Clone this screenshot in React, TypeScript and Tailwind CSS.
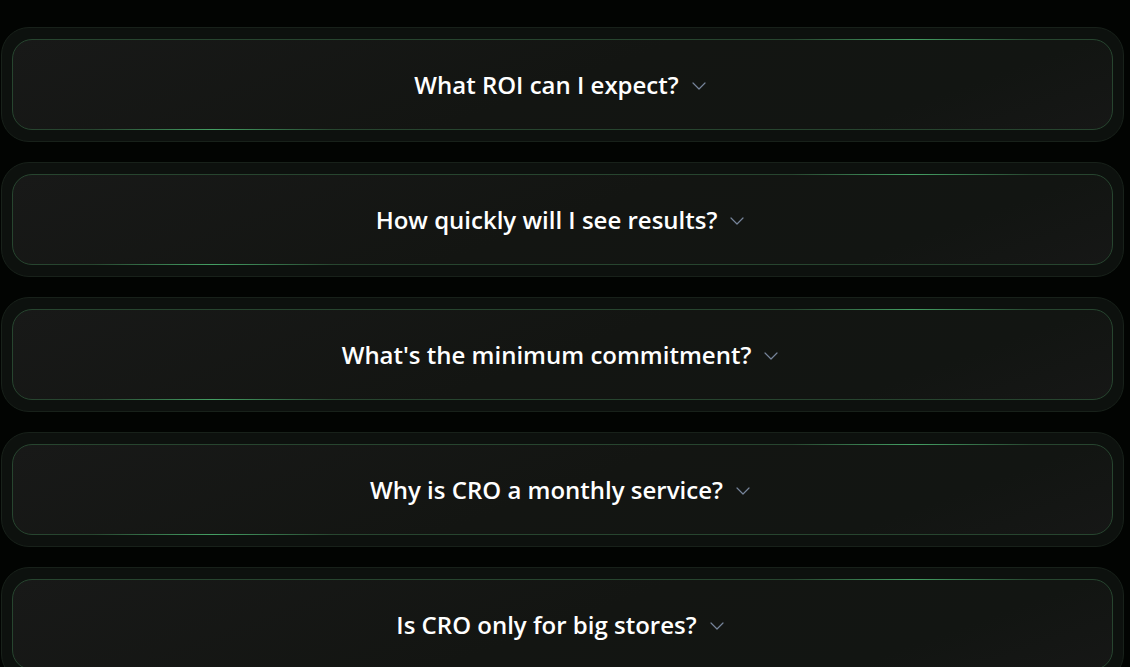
import { ChevronDown } from 'lucide-react'

const questions = [
  'What ROI can I expect?',
  'How quickly will I see results?',
  "What's the minimum commitment?",
  'Why is CRO a monthly service?',
  'Is CRO only for big stores?',
]

function FaqItem({ q }: { q: string }) {
  return (
    <div className="rounded-[28px] border border-[#18211a] bg-[#0d110e] px-[10px] py-[11px]">
      <div className="relative flex h-[91px] items-center justify-center gap-2 rounded-[20px] border border-[#27452f] bg-[linear-gradient(160deg,#181918_0%,#131512_50%,#121512_80%,#161716_100%)]">
        <span className="absolute -top-px right-[80px] h-px w-[240px] bg-[linear-gradient(90deg,transparent,#44a064_50%,transparent)]" />
        <span className="absolute -bottom-px left-[80px] h-px w-[240px] bg-[linear-gradient(90deg,transparent,#44a064_50%,transparent)]" />
        <span className="mt-px font-['Open_Sans',sans-serif] text-[24px] font-semibold text-white">{q}</span>
        <ChevronDown size={24} strokeWidth={1.2} className="mt-[2px] text-[#76849a]" />
      </div>
    </div>
  )
}

export default function App() {
  return (
    <div className="min-h-[667px] overflow-hidden bg-[#020402] pl-px pr-[6px] pt-[27px]">
      <div className="flex flex-col gap-[20px]">
        {questions.map((q) => (
          <FaqItem key={q} q={q} />
        ))}
      </div>
    </div>
  )
}
